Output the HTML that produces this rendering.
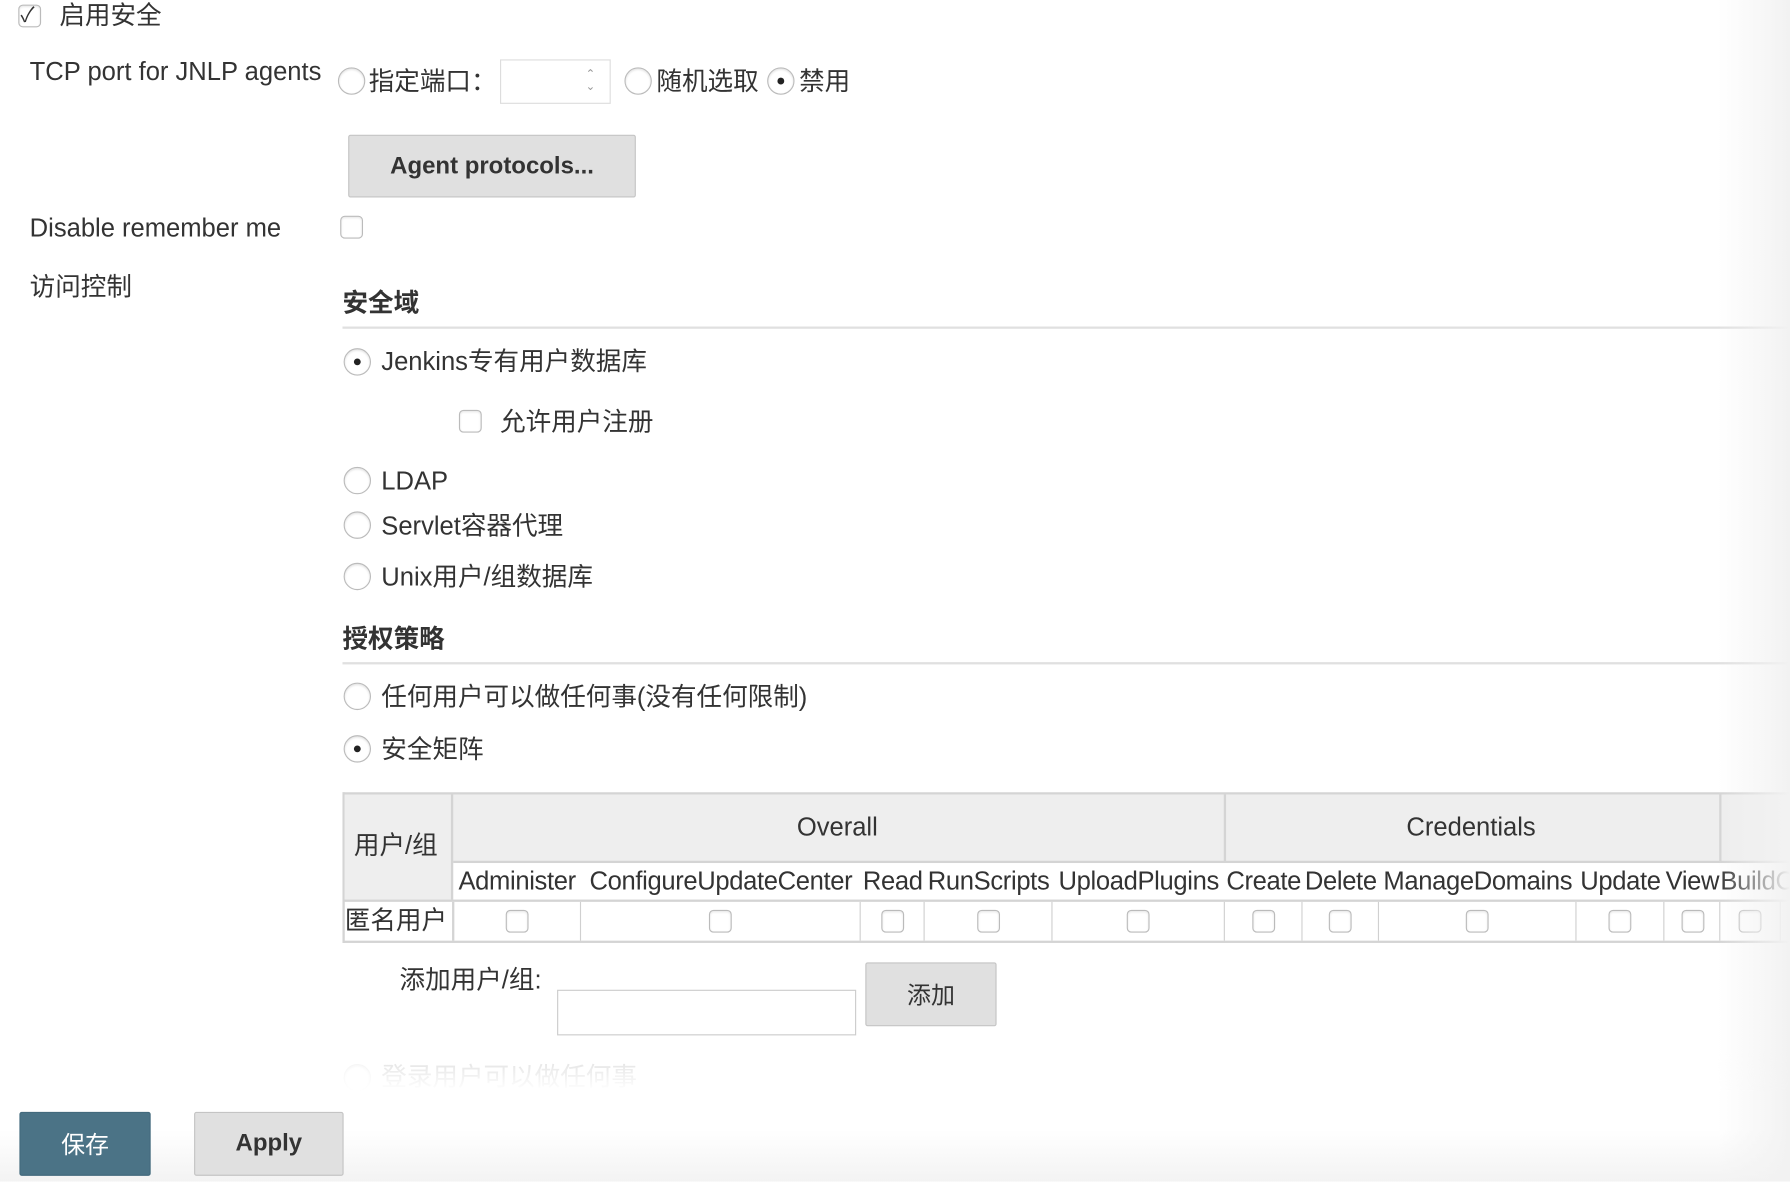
<!DOCTYPE html>
<html><head><meta charset="utf-8"><style>
*{margin:0;padding:0;box-sizing:border-box}
html,body{width:1790px;height:1182px;overflow:hidden;background:#fff}
#c{position:absolute;left:0;top:0;width:1568px;height:1035px;transform:scale(1.14158);transform-origin:0 0;font-family:"Liberation Sans","Noto Sans CJK SC",sans-serif;color:#333;font-size:22.4px}
.t{position:absolute;line-height:26px;white-space:nowrap}
.b{font-weight:bold}
.r{position:absolute;width:24px;height:24px;border:1px solid #bbb;border-radius:50%;background:#fff;box-shadow:inset 0 1px 2px rgba(0,0,0,.12)}
.r.on::after{content:"";position:absolute;left:8px;top:8px;width:6px;height:6px;border-radius:50%;background:#222}
.cb{position:absolute;width:20px;height:20px;border:1px solid #bbb;border-radius:4px;background:#fff;box-shadow:inset 0 1px 2px rgba(0,0,0,.1)}
.btn{position:absolute;background:#e0e0e0;border:1px solid #c4c4c4;border-radius:2px;display:flex;align-items:center;justify-content:center;font-weight:bold;color:#333}
.hl{position:absolute;height:2px;background:#e0e0e0}
.cell{position:absolute;border-right:1px solid #d0d0d0}
.ph{position:absolute;top:757px;height:30px;line-height:30px;text-align:center;letter-spacing:-.3px;white-space:nowrap}
</style></head><body><div id="c">
<div class="cb" style="left:16px;top:4px"></div><div class="t" style="left:18px;top:0px;font-size:18px">✓</div>
<div class="t" style="left:52px;top:1px">启用安全</div>
<div class="t" style="left:26px;top:50px">TCP port for JNLP agents</div>
<div class="r" style="left:296px;top:59px"></div><div class="t" style="left:323px;top:59px">指定端口：</div>
<div style="position:absolute;left:438px;top:52px;width:97px;height:39px;border:1px solid #ddd"></div>
<div class="t" style="left:513px;top:60px;font-size:10px;line-height:11px;color:#999">⌃<br>⌄</div>
<div class="r" style="left:547px;top:59px"></div><div class="t" style="left:575px;top:59px">随机选取</div>
<div class="r on" style="left:672px;top:59px"></div><div class="t" style="left:700px;top:59px">禁用</div>
<div class="btn" style="left:305px;top:118px;width:252px;height:55px;font-size:21px">Agent protocols...</div>
<div class="t" style="left:26px;top:187px">Disable remember me</div>
<div class="cb" style="left:298px;top:189px"></div>
<div class="t" style="left:26px;top:239px">访问控制</div>
<div class="t b" style="left:300px;top:253px">安全域</div>
<div class="hl" style="left:300px;top:286px;width:1300px"></div>
<div class="r on" style="left:301px;top:305px"></div><div class="t" style="left:334px;top:304px">Jenkins专有用户数据库</div>
<div class="cb" style="left:402px;top:359px"></div><div class="t" style="left:438px;top:357px">允许用户注册</div>
<div class="r" style="left:301px;top:409px"></div><div class="t" style="left:334px;top:409px">LDAP</div>
<div class="r" style="left:301px;top:448px"></div><div class="t" style="left:334px;top:448px">Servlet容器代理</div>
<div class="r" style="left:301px;top:493px"></div><div class="t" style="left:334px;top:493px">Unix用户/组数据库</div>
<div class="t b" style="left:300px;top:547px">授权策略</div>
<div class="hl" style="left:300px;top:580px;width:1300px"></div>
<div class="r" style="left:301px;top:598px"></div><div class="t" style="left:334px;top:598px">任何用户可以做任何事(没有任何限制)</div>
<div class="r on" style="left:301px;top:644px"></div><div class="t" style="left:334px;top:644px">安全矩阵</div>
<div style="position:absolute;left:300px;top:694px;width:1300px;height:132px;border:2px solid #d4d4d4;border-right:none"></div>
<div style="position:absolute;left:302px;top:696px;width:1300px;height:59px;background:#eee"></div>
<div style="position:absolute;left:302px;top:696px;width:95px;height:92px;background:#eee;border-right:2px solid #d4d4d4"></div>
<div style="position:absolute;left:397px;top:754px;width:1200px;height:2px;background:#d4d4d4"></div>
<div style="position:absolute;left:300px;top:788px;width:1300px;height:2px;background:#d4d4d4"></div>
<div style="position:absolute;left:1072px;top:696px;width:2px;height:59px;background:#d4d4d4"></div>
<div style="position:absolute;left:1506px;top:696px;width:2px;height:59px;background:#d4d4d4"></div>
<div class="t" style="left:698px;top:712px">Overall</div>
<div class="t" style="left:1232px;top:712px">Credentials</div>
<div class="t" style="left:310px;top:728px">用户/组</div>
<div class="ph" style="left:397px;width:112px">Administer</div>
<div class="ph" style="left:509px;width:245px">ConfigureUpdateCenter</div>
<div class="ph" style="left:754px;width:56px">Read</div>
<div class="ph" style="left:810px;width:112px">RunScripts</div>
<div class="ph" style="left:922px;width:151px">UploadPlugins</div>
<div class="ph" style="left:1073px;width:68px">Create</div>
<div class="ph" style="left:1141px;width:67px">Delete</div>
<div class="ph" style="left:1208px;width:173px">ManageDomains</div>
<div class="ph" style="left:1381px;width:77px">Update</div>
<div class="ph" style="left:1458px;width:49px">View</div>
<div class="ph" style="left:1507px;width:80px;text-align:left">BuildC</div>
<div class="t" style="left:302px;top:794px">匿名用户</div>
<div style="position:absolute;left:396px;top:790px;width:2px;height:34px;background:#d4d4d4"></div>
<div class="cell" style="left:508px;top:790px;height:34px"></div>
<div class="cell" style="left:753px;top:790px;height:34px"></div>
<div class="cell" style="left:809px;top:790px;height:34px"></div>
<div class="cell" style="left:921px;top:790px;height:34px"></div>
<div class="cell" style="left:1072px;top:790px;height:34px"></div>
<div class="cell" style="left:1140px;top:790px;height:34px"></div>
<div class="cell" style="left:1207px;top:790px;height:34px"></div>
<div class="cell" style="left:1380px;top:790px;height:34px"></div>
<div class="cell" style="left:1457px;top:790px;height:34px"></div>
<div class="cell" style="left:1506px;top:790px;height:34px"></div>
<div class="cell" style="left:1559px;top:790px;height:34px"></div>
<div class="cb" style="left:443px;top:797px"></div>
<div class="cb" style="left:621px;top:797px"></div>
<div class="cb" style="left:772px;top:797px"></div>
<div class="cb" style="left:856px;top:797px"></div>
<div class="cb" style="left:987px;top:797px"></div>
<div class="cb" style="left:1097px;top:797px"></div>
<div class="cb" style="left:1164px;top:797px"></div>
<div class="cb" style="left:1284px;top:797px"></div>
<div class="cb" style="left:1409px;top:797px"></div>
<div class="cb" style="left:1473px;top:797px"></div>
<div class="cb" style="left:1523px;top:797px"></div>
<div class="t" style="left:350px;top:846px">添加用户/组:</div>
<div style="position:absolute;left:488px;top:867px;width:262px;height:40px;border:1px solid #ccc"></div>
<div class="btn" style="left:758px;top:843px;width:115px;height:56px;font-weight:normal;font-size:21px">添加</div>
<div class="r" style="left:301px;top:932px;border-color:#ddd"></div><div class="t" style="left:334px;top:931px;color:#aaa">登录用户可以做任何事</div>
<div style="position:absolute;left:0;top:922px;width:1568px;height:113px;background:linear-gradient(rgba(255,255,255,.6),#fff 30%,#fff 60%,#f3f3f3)"></div>
<div style="position:absolute;left:1505px;top:0;width:63px;height:1035px;background:linear-gradient(90deg,rgba(245,245,245,0),#f2f2f2)"></div>
<div class="btn" style="left:17px;top:974px;width:115px;height:56px;background:#4b7386;border-color:#436a7d;color:#fff;font-weight:normal;font-size:21px">保存</div>
<div class="btn" style="left:170px;top:974px;width:131px;height:56px;font-size:21px">Apply</div>
</div></body></html>
